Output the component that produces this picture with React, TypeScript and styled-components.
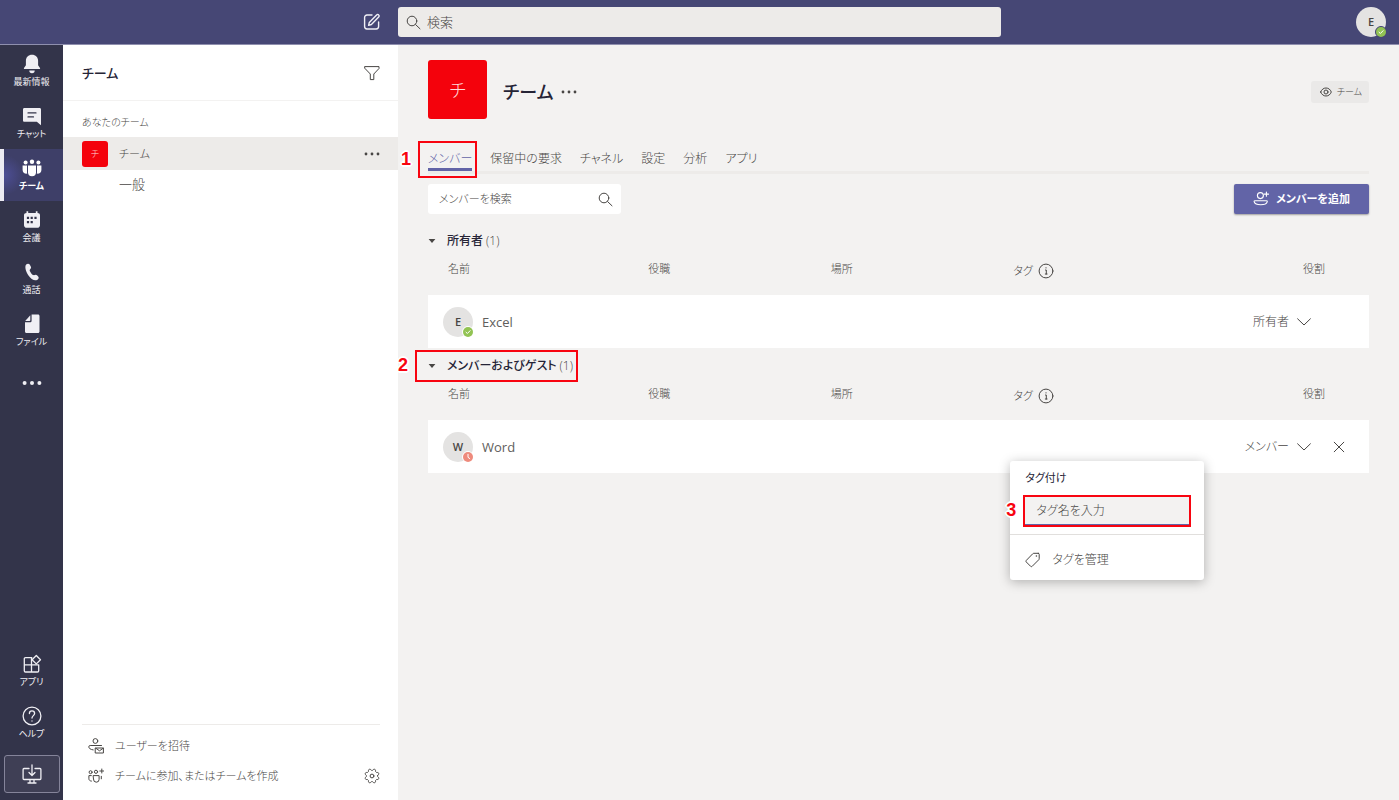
import React from 'react';
import styled, { createGlobalStyle, css } from 'styled-components';

const color = {
  brand: '#464775',
  accent: '#6264a7',
  rail: '#33344a',
  canvas: '#f3f2f1',
  line: '#edebe9',
  ink: '#252436',
  text: '#484644',
  icon: '#605e6c',
  mark: '#f80410',
  tile: '#f4020c',
};

const GlobalStyle = createGlobalStyle`
  *, *::before, *::after { box-sizing: border-box; }
  body {
    margin: 0;
    background: ${color.canvas};
    color: ${color.text};
    font-family: "Open Sans", "Noto Sans CJK JP", sans-serif;
    font-feature-settings: "palt";
    font-size: 13px;
    font-weight: 300;
    line-height: 20px;
  }
  button, input { font: inherit; font-feature-settings: inherit; color: inherit; }
  button { background: none; border: 0; padding: 0; cursor: pointer; }
  a { color: inherit; text-decoration: none; }
  h1, h2, h3 { margin: 0; padding: 0; font-size: inherit; font-weight: inherit; }
  svg { display: block; flex: none; }
`;

const Page = styled.div`
  min-height: 100vh;
  display: grid;
  grid-template-rows: 45px 1fr;
`;

const Header = styled.header`
  display: grid;
  grid-template-columns: 398px minmax(200px, 603px) 1fr;
  align-items: center;
  background: ${color.brand};
  border-bottom: 1px solid #8f8fae;
  padding-right: 13px;
`;

const ComposeButton = styled.button`
  justify-self: end;
  margin-right: 17px;
  color: #f0f0f6;
`;

const SearchBox = styled.label<{ $tone?: 'light' }>`
  display: flex;
  align-items: center;
  height: 30px;
  border-radius: 3px;
  background: ${color.line};
  padding: 0 8px;
  gap: 6px;
  font-size: 13px;
  ${(p) => p.$tone === 'light' && css`
    width: 193px;
    background: #fff;
    padding: 0 8px 0 11px;
    font-size: 11px;
  `}
  input {
    flex: 1;
    min-width: 0;
    border: 0;
    padding: 0;
    background: none;
    outline: none;
  }
  input::placeholder { color: ${color.text}; opacity: 1; }
`;

const Account = styled.button`
  justify-self: end;
`;

const Avatar = styled.span`
  position: relative;
  display: flex;
  align-items: center;
  justify-content: center;
  width: 30px;
  height: 30px;
  border-radius: 50%;
  background: #e4e3e2;
  color: #484644;
  font-size: 11px;
  font-weight: 600;
  flex: none;
`;

const Presence = styled.span<{ $ring: string }>`
  position: absolute;
  right: -1px;
  bottom: -1px;
  border-radius: 50%;
  border: 1px solid ${(p) => p.$ring};
  background: ${(p) => p.$ring};
`;

const Body = styled.div`
  display: grid;
  grid-template-columns: 63px 335px minmax(0, 1fr);
`;

const Rail = styled.nav`
  display: flex;
  flex-direction: column;
  justify-content: space-between;
  background: ${color.rail};
  color: #f0eff4;
`;

const RailItem = styled.a<{ $active?: boolean }>`
  display: flex;
  flex-direction: column;
  align-items: center;
  height: 52px;
  padding-top: 9px;
  gap: 1px;
  font-size: 9px;
  font-weight: 400;
  line-height: 14px;
  ${(p) => p.$active && css`
    border-left: 4px solid #ecebf2;
    padding-right: 4px;
    background: radial-gradient(circle at 0 50%, #4d4e96 0, #3e3f68 20px);
    color: #fff;
    font-weight: 700;
  `}
`;

const MoreItem = styled.button`
  display: flex;
  align-items: center;
  justify-content: center;
  width: 100%;
  height: 52px;
`;

const DownloadButton = styled.button`
  display: flex;
  align-items: center;
  justify-content: center;
  width: 56px;
  height: 38px;
  margin: 6px 4px 7px;
  border: 1px solid #85849a;
  border-radius: 3px;
  background: #3f3f55;
`;

const Sidebar = styled.aside`
  display: flex;
  flex-direction: column;
  background: #fff;
`;

const SidebarHeader = styled.div`
  display: flex;
  align-items: center;
  justify-content: space-between;
  height: 56px;
  padding: 0 18px 0 19px;
  border-bottom: 1px solid #f3f2f1;
  h2 { font-size: 13px; font-weight: 500; color: ${color.ink}; }
`;

const GroupLabel = styled.h3`
  padding: 11px 19px 5px;
  font-size: 10px;
`;

const TeamRow = styled.div`
  display: flex;
  align-items: center;
  justify-content: space-between;
  height: 33px;
  padding: 0 18px 0 19px;
  background: ${color.line};
`;

const TeamLink = styled.a`
  display: flex;
  align-items: center;
  gap: 11px;
  font-size: 11px;
`;

const Tile = styled.span<{ $large?: boolean }>`
  display: flex;
  align-items: center;
  justify-content: center;
  width: ${(p) => (p.$large ? 59 : 26)}px;
  height: ${(p) => (p.$large ? 59 : 26)}px;
  border-radius: 3px;
  background: ${color.tile};
  color: #ffd9da;
  font-size: ${(p) => (p.$large ? 18 : 9)}px;
`;

const ChannelLink = styled.a`
  display: block;
  padding: 4px 56px;
`;

const SidebarFooter = styled.div`
  margin: auto 18px 0 19px;
  padding: 6px 0 9px;
  border-top: 1px solid ${color.line};
`;

const FooterRow = styled.div`
  display: flex;
  align-items: center;
  justify-content: space-between;
  height: 30px;
`;

const FooterAction = styled.button`
  display: flex;
  align-items: center;
  gap: 11px;
  padding-left: 6px;
  font-size: 11px;
`;

const Main = styled.main`
  padding: 15px 30px 40px;
`;

const TitleBar = styled.div`
  display: flex;
  align-items: center;
  height: 59px;
`;

const TitleGroup = styled.div`
  flex: 1;
  display: flex;
  align-items: center;
  padding-top: 4px;
  h1 {
    margin: 0 7px 0 16px;
    font-size: 18px;
    line-height: 28px;
    font-weight: 500;
    color: ${color.ink};
  }
`;

const Chip = styled.span`
  display: flex;
  align-items: center;
  gap: 5px;
  height: 22px;
  margin-left: auto;
  padding: 0 7px 0 9px;
  border-radius: 3px;
  background: #eae9e8;
  font-size: 9px;
`;

const Tabs = styled.div`
  display: flex;
  gap: 18px;
  margin-top: 28px;
  border-bottom: 3px solid ${color.line};
`;

const Tab = styled.button<{ $active?: boolean }>`
  position: relative;
  height: 24px;
  padding-top: 2px;
  font-size: 12px;
  line-height: 19px;
  border-bottom: 3px solid ${(p) => (p.$active ? color.accent : 'transparent')};
  color: ${(p) => (p.$active ? color.accent : color.text)};
`;

const Callout = styled.span<{ $edges: string }>`
  position: absolute;
  inset: ${(p) => p.$edges};
  border: 2px solid ${color.mark};
  pointer-events: none;
  &::before {
    content: attr(data-step);
    position: absolute;
    right: calc(100% + 9px);
    top: 50%;
    margin-top: -11px;
    font: 700 18px/20px "Liberation Sans", sans-serif;
    color: ${color.mark};
    text-shadow: 1px 1px #fff, -1px 1px #fff, 1px -1px #fff, -1px -1px #fff, 0 2px #fff, 2px 0 #fff, -2px 0 #fff, 0 -2px #fff;
  }
`;

const Toolbar = styled.div`
  display: flex;
  justify-content: space-between;
  margin: 10px 0 9px;
`;

const PrimaryButton = styled.button`
  display: flex;
  align-items: center;
  justify-content: center;
  gap: 7px;
  width: 135px;
  height: 30px;
  border-radius: 2px;
  background: ${color.accent};
  box-shadow: 0 1px 2px rgba(0, 0, 0, 0.35);
  color: #fff;
  font-size: 11px;
  font-weight: 700;
`;

const SectionToggle = styled.button`
  position: relative;
  display: flex;
  align-items: center;
  height: 33px;
  padding-top: 2px;
  gap: 11px;
  font-size: 12px;
  strong { color: ${color.ink}; font-weight: 500; margin-right: 3px; }
`;

const Table = styled.table`
  width: 100%;
  border-collapse: collapse;
  table-layout: fixed;
  th {
    height: 39px;
    padding: 3px 0 0;
    text-align: left;
    vertical-align: top;
    font-size: 11px;
    font-weight: inherit;
  }
  th:first-child { width: 23.4%; padding-left: 20px; }
  th:nth-child(2), th:nth-child(3) { width: 19.4%; }
  th:nth-child(5) { width: 12%; text-align: right; }
  th:last-child { width: 44px; }
  td { height: 53px; padding: 0; background: #fff; position: relative; }
  td:first-child { padding-left: 15px; }
  td:nth-child(5) { padding-right: 14px; }
`;

const WithIcon = styled.span`
  display: flex;
  align-items: center;
  gap: 5px;
  padding-top: 2px;
`;

const Person = styled.span`
  display: flex;
  align-items: center;
  gap: 9px;
  font-weight: 400;
  color: #605e5c;
`;

const RoleButton = styled.button`
  display: flex;
  align-items: center;
  gap: 8px;
  margin-left: auto;
  font-size: 12px;
`;

const RemoveButton = styled.button`
  display: block;
  margin-left: 8px;
`;

const Popover = styled.div`
  position: absolute;
  z-index: 1;
  top: 41px;
  left: -3px;
  width: 194px;
  border-radius: 3px;
  background: #fff;
  box-shadow: 0 2px 12px rgba(0, 0, 0, 0.28);
`;

const TagField = styled.div`
  padding: 7px 15px 8px;
  border-bottom: 1px solid #e1dfdd;
  label { display: block; font-size: 11px; font-weight: 400; color: ${color.ink}; }
`;

const TagInputWrap = styled.div`
  position: relative;
  margin-top: 9px;
  input {
    display: block;
    width: 100%;
    height: 29px;
    padding: 0 11px;
    border: 0;
    border-bottom: 2px solid ${color.accent};
    background: ${color.canvas};
    font-size: 12px;
    outline: none;
  }
  input::placeholder { color: ${color.text}; opacity: 1; }
`;

const ManageButton = styled.button`
  display: flex;
  align-items: center;
  gap: 12px;
  width: 100%;
  height: 45px;
  padding: 4px 15px 0;
  font-size: 12px;
`;

/* ---- icons ---- */

type IconProps = { w?: number; h?: number; stroke?: number; children: React.ReactNode };
const Line = ({ w = 16, h = w, stroke = 1, children }: IconProps) => (
  <svg width={w} height={h} viewBox={`0 0 ${w} ${h}`} fill="none" stroke="currentColor" strokeWidth={stroke} strokeLinecap="round" strokeLinejoin="round" aria-hidden="true">
    {children}
  </svg>
);
const Solid = ({ w = 20, h = w, children }: IconProps) => (
  <svg width={w} height={h} viewBox={`0 0 ${w} ${h}`} fill="currentColor" aria-hidden="true">
    {children}
  </svg>
);

const ComposeIcon = () => (
  <Line w={18} stroke={1.4}>
    <path d="M9 2H4a2.4 2.4 0 0 0-2.4 2.4v9.2A2.4 2.4 0 0 0 4 16h9.2a2.4 2.4 0 0 0 2.4-2.4V9" />
    <path d="M5.6 12.4l.7-3 7.3-7.5a1.4 1.4 0 0 1 2.1 0 1.5 1.5 0 0 1 0 2.1l-7.3 7.5z" />
  </Line>
);
const SearchIcon = () => (
  <Line w={15}>
    <circle cx="6" cy="6" r="4.8" />
    <path d="M9.6 9.6l4.4 4.2" />
  </Line>
);
const FilterIcon = () => (
  <Line w={16}>
    <path d="M1 1.6h14v1.9L9.8 9v5.6H6.3V9L1 3.5z" />
  </Line>
);
const Dots = ({ w = 16, r = 1.4 }: { w?: number; r?: number }) => (
  <Solid w={w} h={6}>
    <circle cx={r + 0.6} cy="3" r={r} />
    <circle cx={w / 2} cy="3" r={r} />
    <circle cx={w - r - 0.6} cy="3" r={r} />
  </Solid>
);
const BellIcon = () => (
  <Solid>
    <path d="M10 .8c3.6 0 6.1 2.6 6.1 6v4.4l1.9 2.9c.3.5 0 1-.5 1h-15c-.5 0-.8-.5-.5-1l1.9-2.9V6.8c0-3.4 2.5-6 6.1-6z" />
    <path d="M7.3 16.5h5.4a2.7 2.7 0 0 1-5.4 0z" />
  </Solid>
);
const ChatIcon = () => (
  <Solid>
    <path d="M2.4 2h15.2c.8 0 1.4.6 1.4 1.4v15.8l-4.2-3.4H2.4C1.6 15.8 1 15.2 1 14.4V3.4C1 2.6 1.6 2 2.4 2z" />
    <path d="M6 6.9h8M6 10.9h5.5" stroke={color.rail} strokeWidth="1.2" strokeLinecap="round" />
  </Solid>
);
const TeamsIcon = () => (
  <Solid>
    <circle cx="10" cy="3.8" r="2.2" />
    <circle cx="3.6" cy="4.6" r="2" />
    <circle cx="16.4" cy="4.6" r="2" />
    <path d="M6 7.6h8v6.6a4 4 0 0 1-8 0z" />
    <path d="M.6 7.6H5v6.3c0 .6.1 1.2.3 1.7C2.6 15.9.6 14.6.6 12z" />
    <path d="M19.4 7.6H15v6.3c0 .6-.1 1.2-.3 1.7 2.7.3 4.7-1 4.7-3.6z" />
  </Solid>
);
const CalendarIcon = () => (
  <Solid>
    <path d="M4.5 1.3h1.7V3h7.6V1.3h1.7V3c1.5 0 2.5.9 2.5 2.2v10c0 1.5-1.2 2.6-2.6 2.6H4.6C3.2 17.8 2 16.7 2 15.2v-10C2 3.900 3 3 4.500 3z" />
    <path d="M8.600 6.700h2.200v2.200H8.600zM12.400 6.700h2.200v2.200h-2.200zM4.900 6.700h2.200v2.200H4.900zM4.900 11.100h2.200v2.200H4.900zM8.600 11.100h2.200v2.200H8.600z" fill={color.rail} />
  </Solid>
);
const PhoneIcon = () => (
  <Solid>
    <path d="M4.200 2.500c1-.9 2.800-1 3.500.1l1.200 2.200c.5 1-.1 1.900-.9 2.600-.6.600-.3 1.400.3 2.400.9 1.600 1.900 3 3 3.300.9.300 1.600-.3 2.500-.3.8 0 2.200 1.500 2.700 2.300.6 1-.3 2.400-1.500 2.900-2.700 1.100-6.400-1.300-8.700-4.800C3.800 9.400 2.400 4.400 4.200 2.500z" />
  </Solid>
);
const FileIcon = () => (
  <Solid>
    <path d="M9.600.6h6.400c.9 0 1.500.6 1.500 1.500v15.400c0 .9-.6 1.500-1.500 1.500H4.500c-.9 0-1.500-.6-1.500-1.500V8.300h5c.9 0 1.600-.7 1.600-1.600z" />
    <path d="M8.300 1.300v5c0 .4-.3.700-.7.700H3.200z" />
  </Solid>
);
const AppsIcon = () => (
  <Line w={20} stroke={1.3}>
    <path d="M9.800 3.600H3.500c-.7 0-1.200.5-1.200 1.200v12c0 .7.5 1.200 1.200 1.200h12c.7 0 1.200-.5 1.200-1.200v-6M9.500 4v14M2.300 10.800h14.400" />
    <path d="M14.300 1.500l4.200 4.200-4.200 4.200-4.200-4.200z" />
  </Line>
);
const HelpIcon = () => (
  <Line w={20} stroke={1.3}>
    <circle cx="10" cy="10" r="8.9" />
    <path d="M7.400 7.500c0-1.500 1.100-2.600 2.600-2.600s2.600 1 2.600 2.500c0 2.200-2.600 2.300-2.600 4.700M10 14.800v.3" />
  </Line>
);
const DownloadIcon = () => (
  <Line w={20} stroke={1.3}>
    <path d="M7 4.500H2c-.5 0-.9.400-.9.900v9.200c0 .5.400.9.900.9h16c.5 0 .9-.4.900-.9V5.400c0-.5-.4-.9-.9-.9h-5M10 .8v10.500M7 8.500l3 3 3-3M8 15.500v3M12 15.500v3M6 19h8" />
  </Line>
);
const InviteIcon = () => (
  <Line w={16}>
    <circle cx="7.4" cy="3" r="2.4" />
    <path d="M13.500 7.500H2.200C1.300 7.500.8 8 .8 8.800c0 1.600 1.700 2.800 4.400 3.100" />
    <path d="M7.600 10h7.800v5H7.600zM7.900 10.300l3.600 2.500 3.600-2.500" />
  </Line>
);
const JoinIcon = () => (
  <Line w={16}>
    <circle cx="2.6" cy="4.2" r="1.5" />
    <circle cx="8" cy="3.8" r="1.6" />
    <path d="M13.800 1v4M11.800 3h4M5.500 7.600h5.600v3.800a2.800 2.800 0 0 1-5.600 0zM3.300 7.600H.9v3.200c0 1.300 1 2.200 2.500 2.300M13.300 8.300v2.500" />
  </Line>
);

/* Outline of an eight-lobed cog around (8, 8). */
const gearOutline = Array.from({ length: 96 }, (_, i) => {
  const angle = (i / 96) * Math.PI * 2;
  const radius = 6.4 + 0.8 * Math.tanh(2 * Math.cos(8 * angle + Math.PI));
  return `${(8 + radius * Math.cos(angle)).toFixed(2)} ${(8 + radius * Math.sin(angle)).toFixed(2)}`;
}).join('L');

const GearIcon = () => (
  <Line w={16}>
    <path d={`M${gearOutline}z`} />
    <circle cx="8" cy="8" r="1.9" />
  </Line>
);
const EyeIcon = () => (
  <Line w={12} h={10}>
    <path d="M.7 5C1.600 2.400 3.700 1 6 1s4.400 1.400 5.300 4C10.400 7.600 8.300 9 6 9S1.600 7.600.7 5z" />
    <circle cx="6" cy="5" r="2" />
  </Line>
);
const AddMemberIcon = () => (
  <Line w={16} stroke={1.1}>
    <circle cx="7.4" cy="4.6" r="3" />
    <path d="M13.400 1v4.200M11.300 3.100h4.200M2.200 9.700h11c.8 0 1.200.4 1 1.100-.5 1.800-3 2.900-6.500 2.900s-6-1.100-6.500-2.900c-.2-.7.200-1.100 1-1.100z" />
  </Line>
);
const CaretIcon = () => (
  <Solid w={8} h={6}>
    <path d="M.6 1h6.800L4 5z" />
  </Solid>
);
const InfoIcon = () => (
  <Line w={16}>
    <circle cx="8" cy="8" r="6.9" />
    <path d="M7.500 7h.8v4M7.300 11h1.800M8 4.700v.3" />
  </Line>
);
const ChevronIcon = () => (
  <Line w={14} h={8}>
    <path d="M.6.8L7 7 13.400.8" />
  </Line>
);
const CloseIcon = () => (
  <Line w={12}>
    <path d="M1.200 1.200l9.600 9.600M10.800 1.200l-9.600 9.600" />
  </Line>
);
const TagIcon = () => (
  <Line w={15} h={16}>
    <path d="M13.300 1.300H8.900c-.5 0-.9.200-1.200.5L1.300 8.400a1.100 1.100 0 0 0 0 1.600l4.300 4.300c.5.500 1.100.5 1.600 0l6.500-6.500c.3-.3.500-.7.500-1.100V2.300c0-.6-.4-1-.9-1z" />
    <circle cx="11.4" cy="4" r=".8" fill="currentColor" stroke="none" />
  </Line>
);

const Status = ({ kind, ring = '#fff' }: { kind: 'available' | 'away'; ring?: string }) => (
  <Presence $ring={ring}>
    <svg width="10" height="10" viewBox="0 0 10 10" fill="none" stroke="#fff" strokeLinecap="round">
      <circle cx="5" cy="5" r="5" stroke="none" fill={kind === 'available' ? '#92c353' : '#ee8a7c'} />
      <path d={kind === 'available' ? 'M3 5.200l1.400 1.300 2.700-2.800' : 'M5 2.300v3l1.800 1.300'} />
    </svg>
  </Presence>
);

/* ---- data ---- */

const railItems = [
  { label: '最新情報', icon: <BellIcon /> },
  { label: 'チャット', icon: <ChatIcon /> },
  { label: 'チーム', icon: <TeamsIcon />, active: true },
  { label: '会議', icon: <CalendarIcon /> },
  { label: '通話', icon: <PhoneIcon /> },
  { label: 'ファイル', icon: <FileIcon /> },
];

const tabs = ['メンバー', '保留中の要求', 'チャネル', '設定', '分析', 'アプリ'];

type MemberSectionProps = {
  title: string;
  initial: string;
  name: string;
  role: string;
  status: 'available' | 'away';
  step?: string;
  removable?: boolean;
  popover?: React.ReactNode;
};

const MemberSection = ({ title, initial, name, role, status, step, removable, popover }: MemberSectionProps) => (
  <section>
    <SectionToggle aria-expanded="true">
      <CaretIcon />
      <span>
        <strong>{title}</strong>(1)
      </span>
      {step && <Callout $edges="2px -5px -1px -13px" data-step={step} />}
    </SectionToggle>
    <Table>
      <thead>
        <tr>
          <th>名前</th>
          <th>役職</th>
          <th>場所</th>
          <th>
            <WithIcon>
              タグ
              <InfoIcon />
            </WithIcon>
          </th>
          <th>役割</th>
          <th aria-label="操作" />
        </tr>
      </thead>
      <tbody>
        <tr>
          <td>
            <Person>
              <Avatar>
                {initial}
                <Status kind={status} />
              </Avatar>
              {name}
            </Person>
          </td>
          <td />
          <td />
          <td>{popover}</td>
          <td>
            <RoleButton>
              {role}
              <ChevronIcon />
            </RoleButton>
          </td>
          <td>
            {removable && (
              <RemoveButton aria-label="削除">
                <CloseIcon />
              </RemoveButton>
            )}
          </td>
        </tr>
      </tbody>
    </Table>
  </section>
);

const TagPopover = () => (
  <Popover>
    <TagField>
      <label htmlFor="tag-name">タグ付け</label>
      <TagInputWrap>
        <input id="tag-name" placeholder="タグ名を入力" />
        <Callout $edges="-2px -2px -1px" data-step="3" />
      </TagInputWrap>
    </TagField>
    <ManageButton>
      <TagIcon />
      タグを管理
    </ManageButton>
  </Popover>
);

export default function App() {
  return (
    <Page>
      <GlobalStyle />
      <Header>
        <ComposeButton aria-label="新しいチャット">
          <ComposeIcon />
        </ComposeButton>
        <SearchBox>
          <SearchIcon />
          <input aria-label="検索" placeholder="検索" />
        </SearchBox>
        <Account aria-label="アカウント">
          <Avatar>
            E
            <Status kind="available" ring={color.brand} />
          </Avatar>
        </Account>
      </Header>
      <Body>
        <Rail>
          <div>
            {railItems.map((item) => (
              <RailItem key={item.label} href="#" $active={item.active}>
                {item.icon}
                {item.label}
              </RailItem>
            ))}
            <MoreItem aria-label="その他">
              <Dots w={20} r={2} />
            </MoreItem>
          </div>
          <div>
            <RailItem href="#">
              <AppsIcon />
              アプリ
            </RailItem>
            <RailItem href="#">
              <HelpIcon />
              ヘルプ
            </RailItem>
            <DownloadButton aria-label="ダウンロード">
              <DownloadIcon />
            </DownloadButton>
          </div>
        </Rail>
        <Sidebar>
          <SidebarHeader>
            <h2>チーム</h2>
            <button aria-label="フィルター">
              <FilterIcon />
            </button>
          </SidebarHeader>
          <GroupLabel>あなたのチーム</GroupLabel>
          <TeamRow>
            <TeamLink href="#">
              <Tile>チ</Tile>
              チーム
            </TeamLink>
            <button aria-label="その他のオプション">
              <Dots />
            </button>
          </TeamRow>
          <ChannelLink href="#">一般</ChannelLink>
          <SidebarFooter>
            <FooterRow>
              <FooterAction>
                <InviteIcon />
                ユーザーを招待
              </FooterAction>
            </FooterRow>
            <FooterRow>
              <FooterAction>
                <JoinIcon />
                チームに参加、またはチームを作成
              </FooterAction>
              <button aria-label="設定">
                <GearIcon />
              </button>
            </FooterRow>
          </SidebarFooter>
        </Sidebar>
        <Main>
          <TitleBar>
            <Tile $large>チ</Tile>
            <TitleGroup>
              <h1>チーム</h1>
              <button aria-label="チームのオプション">
                <Dots />
              </button>
              <Chip>
                <EyeIcon />
                チーム
              </Chip>
            </TitleGroup>
          </TitleBar>
          <Tabs role="tablist">
            {tabs.map((tab, i) => (
              <Tab key={tab} role="tab" aria-selected={i === 0} $active={i === 0}>
                {tab}
                {i === 0 && <Callout $edges="-6px -5px -10px -10px" data-step="1" />}
              </Tab>
            ))}
          </Tabs>
          <Toolbar>
            <SearchBox $tone="light">
              <input aria-label="メンバーを検索" placeholder="メンバーを検索" />
              <SearchIcon />
            </SearchBox>
            <PrimaryButton>
              <AddMemberIcon />
              メンバーを追加
            </PrimaryButton>
          </Toolbar>
          <MemberSection title="所有者" initial="E" name="Excel" role="所有者" status="available" />
          <MemberSection
            title="メンバーおよびゲスト"
            initial="W"
            name="Word"
            role="メンバー"
            status="away"
            step="2"
            removable
            popover={<TagPopover />}
          />
        </Main>
      </Body>
    </Page>
  );
}
